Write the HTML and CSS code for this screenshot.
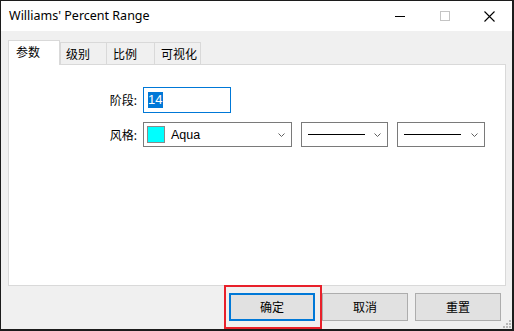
FILE: index.html
```html
<!DOCTYPE html>
<html>
<head>
<meta charset="utf-8">
<link rel="stylesheet" href="styles.css">
</head>
<body>
<div class="window">
  <div class="titlebar">
    <span class="title">Williams' Percent Range</span>
    <div class="controls">
      <span class="ctl"><svg width="10" height="10" viewBox="0 0 10 10"><path d="M0 5.5H10" stroke="#000" stroke-width="1"/></svg></span>
      <span class="ctl"><svg width="10" height="10" viewBox="0 0 10 10"><rect x="0.5" y="0.5" width="9" height="9" fill="none" stroke="#c4c4c4" stroke-width="1"/></svg></span>
      <span class="ctl"><svg width="11" height="11" viewBox="0 0 11 11"><path d="M0.5 0.5L10.5 10.5M10.5 0.5L0.5 10.5" stroke="#000" stroke-width="1.1"/></svg></span>
    </div>
  </div>
  <div class="body">
    <div class="tabs">
      <div class="tab active">参数</div>
      <div class="tab t2">级别</div>
      <div class="tab t3">比例</div>
      <div class="tab t4">可视化</div>
    </div>
    <div class="panel">
      <div class="form">
        <span class="label">阶段:</span>
        <div class="input"><span class="sel">14</span></div>
        <span class="label">风格:</span>
        <div class="combos">
          <div class="combo c1">
            <span class="swatch"></span>
            <span class="ctext">Aqua</span>
            <svg class="chev" width="7" height="4" viewBox="0 0 7 4"><path d="M0.5 0.5L3.5 3.5L6.5 0.5" fill="none" stroke="#606060" stroke-width="1"/></svg>
          </div>
          <div class="combo c2">
            <span class="line"></span>
            <svg class="chev" width="7" height="4" viewBox="0 0 7 4"><path d="M0.5 0.5L3.5 3.5L6.5 0.5" fill="none" stroke="#606060" stroke-width="1"/></svg>
          </div>
          <div class="combo c3">
            <span class="line"></span>
            <svg class="chev" width="7" height="4" viewBox="0 0 7 4"><path d="M0.5 0.5L3.5 3.5L6.5 0.5" fill="none" stroke="#606060" stroke-width="1"/></svg>
          </div>
        </div>
      </div>
    </div>
    <div class="buttons">
      <div class="btn default">确定<span class="mark"></span></div>
      <div class="btn">取消</div>
      <div class="btn">重置</div>
    </div>
  </div>
  <div class="grip">
    <span class="dot" style="grid-column:3;grid-row:1"></span>
    <span class="dot" style="grid-column:2;grid-row:2"></span>
    <span class="dot" style="grid-column:3;grid-row:2"></span>
    <span class="dot" style="grid-column:1;grid-row:3"></span>
    <span class="dot" style="grid-column:2;grid-row:3"></span>
    <span class="dot" style="grid-column:3;grid-row:3"></span>
  </div>
</div>
</body>
</html>
```
FILE: styles.css
```css
html, body {
  margin: 0;
  padding: 0;
}
body {
  background: #1c1c1c;
  width: 514px;
  height: 331px;
  overflow: hidden;
  font-family: "Noto Sans", "Noto Sans CJK SC", sans-serif;
  font-size: 12px;
  color: #000;
}
.window {
  position: relative;
  margin: 1px 0 0 1px;
  width: 511px;
  height: 328px;
  background: #f0f0f0;
  display: flex;
  flex-direction: column;
}
.titlebar {
  height: 30px;
  background: #fff;
  display: flex;
  align-items: center;
  justify-content: space-between;
}
.title {
  padding-left: 8px;
  font-size: 12.5px;
  line-height: 30px;
  padding-bottom: 1px;
}
.controls {
  display: flex;
  height: 30px;
}
.ctl {
  width: 45px;
  height: 30px;
  display: flex;
  align-items: center;
  justify-content: center;
}
.ctl svg {
  display: block;
}
.body {
  flex: 1;
  display: flex;
  flex-direction: column;
  padding: 9px 6px 0 7px;
}
.tabs {
  display: flex;
  align-items: flex-end;
  height: 24px;
  position: relative;
  z-index: 1;
}
.tab {
  box-sizing: border-box;
  height: 22px;
  border: 1px solid #d9d9d9;
  border-bottom: none;
  background: #f0f0f0;
  padding-left: 5px;
  display: flex;
  align-items: center;
  margin-left: -1px;
}
.tab.active {
  height: 25px;
  width: 52px;
  margin-left: 0;
  margin-bottom: -1px;
  background: #fff;
  padding-left: 7px;
  padding-bottom: 2px;
}
.t2 { width: 47px; margin-left: 0; }
.t3 { width: 49px; padding-left: 6px; }
.t4 { width: 47px; padding-left: 6px; }
.panel {
  box-sizing: border-box;
  height: 222px;
  background: #fff;
  border: 1px solid #d9d9d9;
}
.form {
  display: grid;
  grid-template-columns: 129px auto;
  column-gap: 5px;
  row-gap: 9px;
  padding-top: 22px;
  align-items: center;
}
.label {
  text-align: right;
  padding-right: 1px;
}
.input {
  box-sizing: border-box;
  width: 88px;
  height: 26px;
  border: 1px solid #0078d7;
  padding: 3px 0 0 4px;
}
.sel {
  display: inline-block;
  background: #0078d7;
  color: #fff;
  line-height: 16px;
  height: 16px;
  font-family: "Liberation Sans", sans-serif;
  font-size: 13px;
  padding-right: 1px;
}
.combos {
  display: flex;
  gap: 9px;
}
.combo {
  box-sizing: border-box;
  height: 25px;
  border: 1px solid #7a7a7a;
  display: flex;
  align-items: center;
  position: relative;
}
.c1 { width: 149px; padding-left: 3px; }
.c2 { width: 87px; padding-left: 6px; }
.c3 { width: 88px; padding-left: 6px; }
.swatch {
  box-sizing: border-box;
  width: 18px;
  height: 17px;
  background: #00ffff;
  border: 1px solid #8a8a8a;
}
.ctext {
  margin-left: 6px;
  font-family: "Liberation Sans", sans-serif;
  font-size: 12.5px;
}
.line {
  width: 57px;
  height: 1px;
  background: #000;
}
.chev {
  position: absolute;
  right: 6px;
  top: 10px;
}
.buttons {
  display: flex;
  justify-content: flex-end;
  gap: 7px;
  margin-top: 7px;
  padding-right: 5px;
}
.btn {
  box-sizing: border-box;
  position: relative;
  width: 86px;
  height: 28px;
  background: #e1e1e1;
  border: 1px solid #adadad;
  display: flex;
  align-items: center;
  justify-content: center;
  padding-bottom: 1px;
}
.btn.default {
  border: 2px solid #0078d7;
}
.mark {
  position: absolute;
  left: -7px;
  top: -10px;
  width: 98px;
  height: 44px;
  box-sizing: border-box;
  border: 2px solid #e8202a;
}
.grip {
  position: absolute;
  right: 1px;
  bottom: 1px;
  display: grid;
  grid-template-columns: 2px 2px 2px;
  grid-template-rows: 2px 2px 2px;
  gap: 1px;
}
.dot {
  width: 2px;
  height: 2px;
  background: #b8b8b8;
}
```
